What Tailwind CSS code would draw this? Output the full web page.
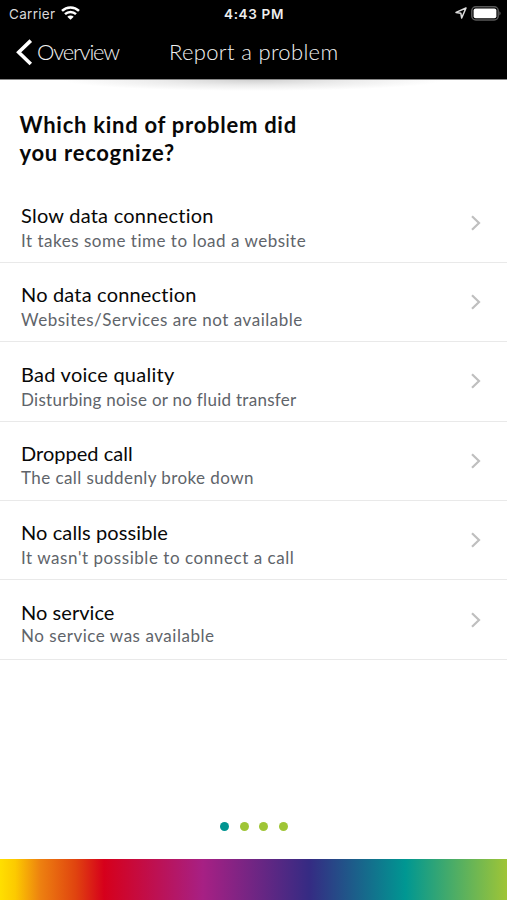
<!DOCTYPE html>
<html lang="en">
<head>
<meta charset="utf-8">
<title>Report a problem</title>
<script src="https://cdn.jsdelivr.net/npm/@tailwindcss/browser@4"></script>
</head>
<body class="bg-white text-[#080808] font-['Lato',sans-serif]">
<main class="w-[507px] h-[900px] flex flex-col overflow-hidden">
  <header class="h-[79px] shrink-0 bg-black text-white">
    <div class="h-[27px] grid grid-cols-3 items-center pl-[9px] pr-[6px] font-['Inter',sans-serif]">
      <div class="flex items-center gap-[6px] text-[13.5px] leading-[27px] text-[#d8d8d8] tracking-[0.3px]">
        <span class="pt-px">Carrier</span>
        <svg class="w-[19px] h-[14px] -mt-[2px]" viewBox="0 0 19 14" fill="none" stroke="#fff" stroke-width="2.5">
          <path d="M1 4.9a12.2 12.2 0 0 1 17 0"/>
          <path d="M4 8.2a8 8 0 0 1 11 0"/>
          <path d="M9.5 13.8 6.3 10.7a4.6 4.6 0 0 1 6.4 0z" fill="#fff" stroke="none"/>
        </svg>
      </div>
      <div class="pt-px text-center text-[13.5px] leading-[27px] font-semibold text-[#eee] tracking-[0.65px] whitespace-nowrap pr-[2px]">4:43 PM</div>
      <div class="flex items-center justify-end gap-[4px] pb-[2px]">
        <svg class="w-[12px] h-[12px]" viewBox="0 0 12 12" fill="none" stroke="#ddd" stroke-width="1.5" stroke-linejoin="round"><path d="M11 1 1 5.4l4.8.8.9 4.8z"/></svg>
        <svg class="w-[30px] h-[15px]" viewBox="0 0 30 15">
          <rect x=".8" y=".8" width="26.4" height="13.2" rx="4" fill="none" stroke="#585858" stroke-width="1.5"/>
          <rect x="2.6" y="2.5" width="22.8" height="9.8" rx="2" fill="#fff"/>
          <path d="M28.3 5.2c1.8.8 1.8 3.4 0 4.2z" fill="#585858"/>
        </svg>
      </div>
    </div>
    <div class="h-[52px] flex items-start pl-[16px] text-[22px] leading-[28px] font-light text-[#f2f2f2]">
      <svg class="w-[17px] h-[27px] mt-[12px]" viewBox="0 0 17 27" fill="none" stroke="#fff" stroke-width="3.6"><path d="M14.8 1.6 2.7 13.3 14.8 25"/></svg>
      <span class="ml-[4px] w-[132px] mt-[11px] tracking-[-1.2px]">Overview</span>
      <h1 class="mt-[11px] tracking-[0.33px] whitespace-nowrap">Report a problem</h1>
    </div>
  </header>
  <div class="h-[12px] shrink-0 bg-[radial-gradient(ellipse_190px_11px_at_50%_0,#d2d2d2,#ececec_50%,#fff)] border-t border-[#888]"></div>

  <h2 class="pl-[19.5px] pt-[20px] h-[92.4px] shrink-0 text-[22px] leading-[28px] font-bold tracking-[0.73px]">Which kind of problem did<br>you recognize?</h2>

  <ul class="shrink-0 text-[20px] leading-[24px]">
    <li class="h-[79.4px] border-b border-[#e9e9e9] flex items-center justify-between pl-[21px] pr-[26px]">
      <div class="self-start pt-[19.4px]"><p class="tracking-[0.24px]">Slow data connection</p><p class="mt-[2px] text-[17px] text-[#60646a] tracking-[0.51px]">It takes some time to load a website</p></div>
      <svg class="w-[11px] h-[16px]" viewBox="0 0 11 16" fill="none" stroke="#bfbfbf" stroke-width="2.2"><path d="M2 1.2 9 8l-7 6.8"/></svg>
    </li>
    <li class="h-[79.4px] border-b border-[#e9e9e9] flex items-center justify-between pl-[21px] pr-[26px]">
      <div class="self-start pt-[19.4px]"><p class="tracking-[0.18px]">No data connection</p><p class="mt-[2px] text-[17px] text-[#60646a] tracking-[0.51px]">Websites/Services are not available</p></div>
      <svg class="w-[11px] h-[16px]" viewBox="0 0 11 16" fill="none" stroke="#bfbfbf" stroke-width="2.2"><path d="M2 1.2 9 8l-7 6.8"/></svg>
    </li>
    <li class="h-[79.4px] border-b border-[#e9e9e9] flex items-center justify-between pl-[21px] pr-[26px]">
      <div class="self-start pt-[19.4px]"><p class="tracking-[0.26px]">Bad voice quality</p><p class="mt-[2px] text-[17px] text-[#60646a] tracking-[0.28px]">Disturbing noise or no fluid transfer</p></div>
      <svg class="w-[11px] h-[16px]" viewBox="0 0 11 16" fill="none" stroke="#bfbfbf" stroke-width="2.2"><path d="M2 1.2 9 8l-7 6.8"/></svg>
    </li>
    <li class="h-[79.4px] border-b border-[#e9e9e9] flex items-center justify-between pl-[21px] pr-[26px]">
      <div class="self-start pt-[19.4px]"><p class="tracking-[0.02px]">Dropped call</p><p class="mt-px text-[17px] text-[#60646a] tracking-[0.42px]">The call suddenly broke down</p></div>
      <svg class="w-[11px] h-[16px]" viewBox="0 0 11 16" fill="none" stroke="#bfbfbf" stroke-width="2.2"><path d="M2 1.2 9 8l-7 6.8"/></svg>
    </li>
    <li class="h-[79.4px] border-b border-[#e9e9e9] flex items-center justify-between pl-[21px] pr-[26px]">
      <div class="self-start pt-[19.4px]"><p class="tracking-[0.1px]">No calls possible</p><p class="mt-[2px] text-[17px] text-[#60646a] tracking-[0.56px]">It wasn't possible to connect a call</p></div>
      <svg class="w-[11px] h-[16px]" viewBox="0 0 11 16" fill="none" stroke="#bfbfbf" stroke-width="2.2"><path d="M2 1.2 9 8l-7 6.8"/></svg>
    </li>
    <li class="h-[79.4px] border-b border-[#e9e9e9] flex items-center justify-between pl-[21px] pr-[26px]">
      <div class="self-start pt-[19.4px]"><p class="tracking-[0.05px]">No service</p><p class="mt-[0.5px] text-[17px] text-[#60646a] tracking-[0.53px]">No service was available</p></div>
      <svg class="w-[11px] h-[16px]" viewBox="0 0 11 16" fill="none" stroke="#bfbfbf" stroke-width="2.2"><path d="M2 1.2 9 8l-7 6.8"/></svg>
    </li>
  </ul>

  <footer class="mt-auto shrink-0">
    <div class="flex justify-center gap-[10.6px] pb-[28px] pl-px">
      <i class="size-[9px] rounded-full bg-[#009490]"></i>
      <i class="size-[9px] rounded-full bg-[#9fc536]"></i>
      <i class="size-[9px] rounded-full bg-[#9fc536]"></i>
      <i class="size-[9px] rounded-full bg-[#9fc536]"></i>
    </div>
    <div class="h-[41px] bg-[linear-gradient(90deg,#ffdf00_0%,#fcca00_3%,#ed8010_8%,#e0430f_15%,#d6001b_20.5%,#a72084_40%,#352b83_61%,#009792_80%,#9fc536_100%)]"></div>
  </footer>
</main>
</body>
</html>
